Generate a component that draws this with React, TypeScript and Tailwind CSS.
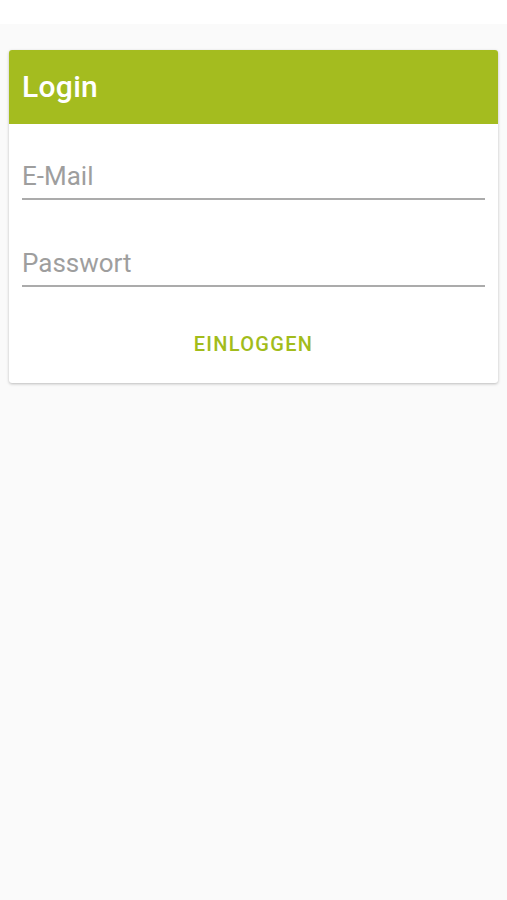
import React from "react";

export default function App() {
  return (
    <div
      className="min-h-[900px] w-full bg-[#fafafa]"
      style={{ fontFamily: "Roboto, 'Noto Sans', sans-serif" }}
    >
      <div className="h-[24px] bg-white" />
      <div className="px-[9px] pt-[26px]">
        <div className="overflow-hidden rounded-[3px] bg-white shadow-[0_1px_3px_rgba(0,0,0,0.25)]">
          <div className="flex h-[74px] items-center bg-[#a4bc1f] px-[13px]">
            <h1 className="text-[30px] font-medium leading-none tracking-[0.3px] text-white">Login</h1>
          </div>
          <div className="px-[13px] pb-[27px] pt-[37px]">
            <div className="border-b-2 border-[#ababab] pb-[7px]">
              <input
                type="email"
                placeholder="E-Mail"
                className="block h-[30px] w-full bg-transparent text-[26px] leading-[30px] text-[#333] outline-none placeholder:text-[#9e9e9e]"
              />
            </div>
            <div className="mt-[48px] border-b-2 border-[#ababab] pb-[7px]">
              <input
                type="password"
                placeholder="Passwort"
                className="block h-[30px] w-full bg-transparent text-[26px] leading-[30px] text-[#333] outline-none placeholder:text-[#9e9e9e]"
              />
            </div>
            <div className="mt-[45px] flex justify-center">
              <button className="text-[20px] font-medium leading-[24px] tracking-[1.3px] text-[#a2bc1b]">
                EINLOGGEN
              </button>
            </div>
          </div>
        </div>
      </div>
    </div>
  );
}
